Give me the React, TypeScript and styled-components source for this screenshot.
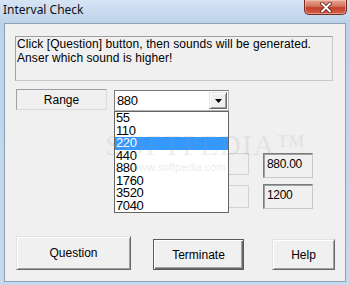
import React from "react";
import styled, { createGlobalStyle } from "styled-components";

const Global = createGlobalStyle`
  html, body { margin: 0; padding: 0; width: 350px; height: 285px; overflow: hidden; background: #c2d6ed; }
  * { box-sizing: border-box; }
`;

const Window = styled.div`
  width: 350px;
  height: 285px;
  display: flex;
  flex-direction: column;
  background: linear-gradient(#d6e4f4, #bed3eb 22px, #c6d9ee);
  font-family: "Liberation Sans", Arial, sans-serif;
  font-size: 12px;
  color: #000;
`;

const TitleBar = styled.div`
  flex: none;
  height: 23px;
  display: flex;
  justify-content: space-between;
  align-items: flex-start;
  padding: 0 3px 0 3px;
`;

const Title = styled.div`
  font-family: "Noto Sans", "Open Sans", sans-serif;
  font-size: 12px;
  line-height: 20px;
  color: #111;
`;

const CloseButton = styled.div`
  width: 43px;
  height: 15px;
  border: 1px solid #7a2a1e;
  border-top: none;
  border-radius: 0 0 5px 5px;
  background: linear-gradient(#e8a593, #d2735d 45%, #c3412b 55%, #d2614a);
  box-shadow: inset 0 0 0 1px rgba(255, 220, 210, 0.45);
  display: flex;
  align-items: center;
  justify-content: center;
`;

const Client = styled.div`
  flex: 1;
  margin: 0 4px 3px 4px;
  border: 1px solid #8ea0b5;
  background: #f0f0f0;
  position: relative;
  display: flex;
  flex-direction: column;
`;

const Message = styled.div`
  margin: 12px 0 0 10px;
  width: 318px;
  height: 45px;
  border: 1px solid;
  border-color: #a0a0a0 #c8c8c8 #c8c8c8 #a0a0a0;
  padding: 0 0 0 1px;
  font-size: 12px;
  line-height: 14px;
  letter-spacing: 0.07px;
`;

const Row = styled.div<{ $top: number; $left: number; $align?: string }>`
  display: flex;
  align-items: ${(p) => p.$align || "flex-start"};
  margin: ${(p) => p.$top}px 0 0 ${(p) => p.$left}px;
`;

const RangeLabel = styled.div`
  width: 91px;
  height: 21px;
  border: 1px solid;
  border-color: #a0a0a0 #dcdcdc #dcdcdc #a0a0a0;
  display: flex;
  align-items: center;
  justify-content: center;
  font-size: 12px;
`;

const ComboWrap = styled.div`
  position: relative;
  margin: 1px 0 0 7px;
`;

const Combo = styled.div`
  width: 115px;
  height: 21px;
  border: 1px solid;
  border-color: #7a7a7a #b5b5b5 #b5b5b5 #7a7a7a;
  background: #fff;
  display: flex;
  align-items: center;
  justify-content: space-between;
  padding: 0 1px 0 2px;
  font-size: 13px;
  letter-spacing: -0.4px;
`;

const DropButton = styled.div`
  width: 18px;
  height: 17px;
  background: #f0f0f0;
  border: 1px solid;
  border-color: #e3e3e3 #696969 #696969 #e3e3e3;
  box-shadow: inset 1px 1px #fff, inset -1px -1px #a0a0a0;
  display: flex;
  align-items: center;
  justify-content: center;
`;

const List = styled.div`
  position: absolute;
  top: 21px;
  left: 0;
  width: 115px;
  height: 102px;
  background: #fff;
  border: 1px solid #646464;
  z-index: 2;
`;

const Item = styled.div<{ $selected?: boolean }>`
  height: 12.57px;
  line-height: 12.57px;
  padding-left: 1px;
  font-size: 13px;
  letter-spacing: -0.4px;
  background: ${(p) => (p.$selected ? "#3399ff" : "transparent")};
  color: ${(p) => (p.$selected ? "#fff" : "#000")};
`;

const HiddenBox = styled.div<{ $h: number; $mt: number }>`
  width: 79px;
  height: ${(p) => p.$h}px;
  margin-top: ${(p) => p.$mt}px;
  border: 1px solid #d2d2d2;
`;

const ValueBox = styled.div`
  width: 50px;
  height: 25px;
  margin-left: 14px;
  border: 1px solid;
  border-color: #7c7c7c #c8c8c8 #c8c8c8 #7c7c7c;
  box-shadow: inset 1px 1px #a0a0a0;
  padding: 3px 0 0 3px;
  font-size: 12px;
  letter-spacing: -0.3px;
`;

const Button = styled.div<{ $w: number; $h: number; $gap?: number; $default?: boolean }>`
  width: ${(p) => p.$w}px;
  height: ${(p) => p.$h}px;
  margin-left: ${(p) => p.$gap || 0}px;
  background: #f0f0f0;
  border: 1px solid;
  border-color: ${(p) =>
    p.$default ? "#5a5a5a" : "#e3e3e3 #696969 #696969 #e3e3e3"};
  box-shadow: ${(p) =>
    p.$default
      ? "inset 1px 1px #fff, inset -1px -1px #696969, inset -2px -2px #a0a0a0"
      : "inset 1px 1px #fff, inset -1px -1px #a0a0a0"};
  display: flex;
  align-items: center;
  justify-content: center;
  font-size: 12px;
`;

const Watermark = styled.div`
  position: absolute;
  left: 100px;
  top: 104px;
  font-family: "Liberation Serif", serif;
  font-size: 30px;
  letter-spacing: 1px;
  color: rgba(150, 150, 150, 0.16);
  pointer-events: none;
  z-index: 3;
  white-space: nowrap;
`;

const WatermarkUrl = styled.div`
  position: absolute;
  left: 126px;
  top: 137px;
  font-family: "Liberation Sans", sans-serif;
  font-size: 11px;
  color: rgba(150, 150, 150, 0.2);
  pointer-events: none;
  z-index: 3;
`;

const options = ["55", "110", "220", "440", "880", "1760", "3520", "7040"];

export default function App() {
  return (
    <>
      <Global />
      <Window>
        <TitleBar>
          <Title>Interval Check</Title>
          <CloseButton>
            <svg width="14" height="11" viewBox="0 0 14 11">
              <path d="M3 1.5 L11 9.5 M11 1.5 L3 9.5" stroke="#5a1a10" strokeWidth="3.6" strokeLinecap="round" />
              <path d="M3 1.5 L11 9.5 M11 1.5 L3 9.5" stroke="#fff" strokeWidth="2" strokeLinecap="round" />
            </svg>
          </CloseButton>
        </TitleBar>
        <Client>
          <Message>
            Click [Question] button, then sounds will be generated.
            <br />
            Anser which sound is higher!
          </Message>
          <Row $top={8} $left={11}>
            <RangeLabel>Range</RangeLabel>
            <ComboWrap>
              <Combo>
                <span>880</span>
                <DropButton>
                  <svg width="7" height="4" viewBox="0 0 7 4">
                    <path d="M0 0 H7 L3.5 4 Z" fill="#000" />
                  </svg>
                </DropButton>
              </Combo>
              <List>
                {options.map((o) => (
                  <Item key={o} $selected={o === "220"}>
                    {o}
                  </Item>
                ))}
              </List>
            </ComboWrap>
          </Row>
          <Row $top={42} $left={165}>
            <HiddenBox $h={22} $mt={0} />
            <ValueBox>880.00</ValueBox>
          </Row>
          <Row $top={6} $left={165}>
            <HiddenBox $h={23} $mt={1} />
            <ValueBox>1200</ValueBox>
          </Row>
          <Row $top={27} $left={11} $align="flex-end">
            <Button $w={115} $h={34}>Question</Button>
            <Button $w={91} $h={31} $gap={22} $default>Terminate</Button>
            <Button $w={63} $h={31} $gap={28}>Help</Button>
          </Row>
          <Watermark>SOFTPEDIA™</Watermark>
          <WatermarkUrl>www.softpedia.com</WatermarkUrl>
        </Client>
      </Window>
    </>
  );
}
